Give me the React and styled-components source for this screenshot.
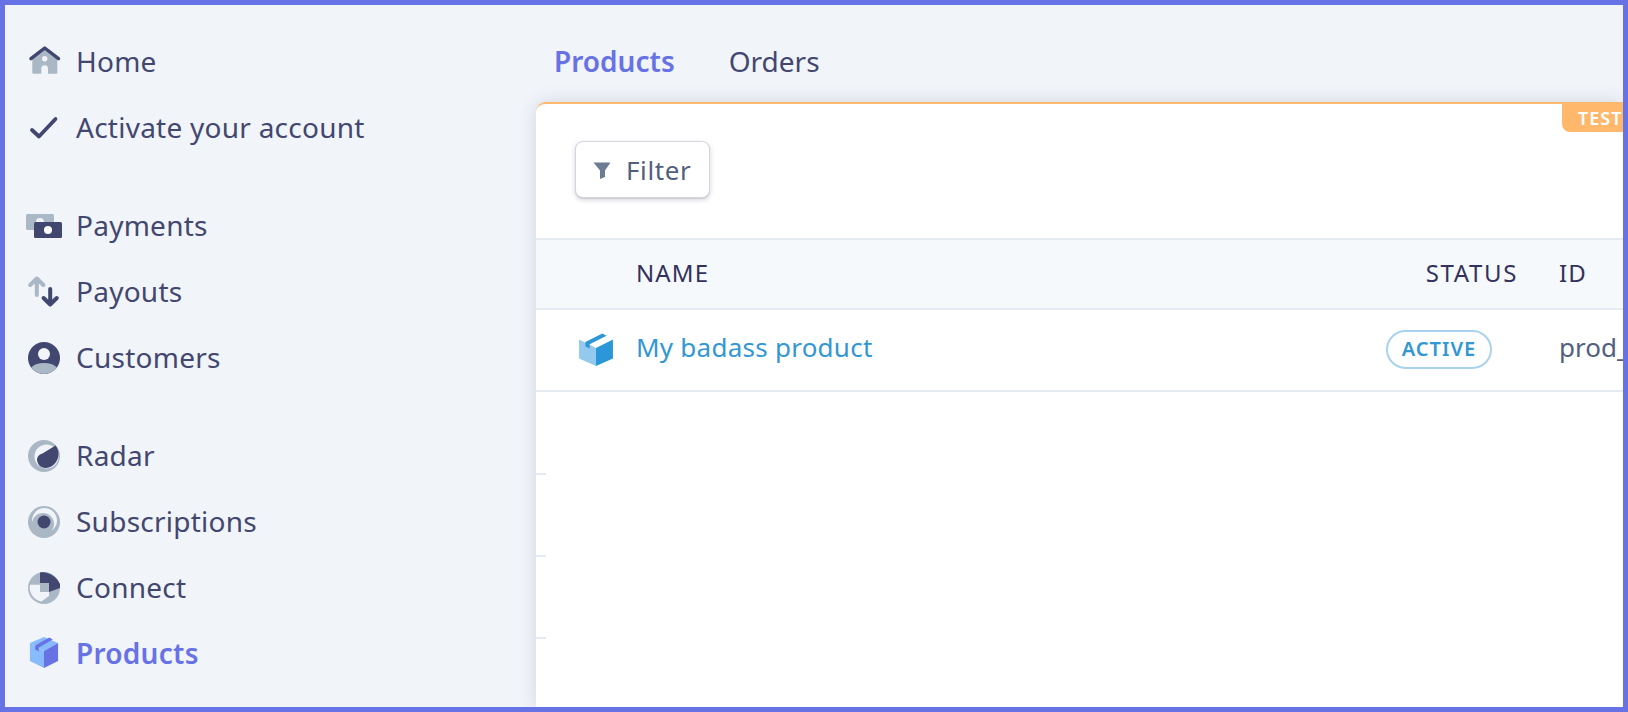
import React from 'react'
import styled, { createGlobalStyle } from 'styled-components'

const Global = createGlobalStyle`
  html, body { margin: 0; padding: 0; height: 100%; }
  body { font-family: "Noto Sans", Lato, sans-serif; background: #f1f4f9; }
  #root { height: 100%; }
`

const DARK = '#424770'
const GREY = '#aab7c4'
const BG = '#f1f4f9'

// Icons
const HomeIcon = () => (
  <svg width="36" height="36" viewBox="0 0 36 36">
    <path fill={GREY} fillRule="evenodd" d="M6.300 12 18.700 4l12.600 8v16.700a1 1 0 0 1-1 1H22V24.500a3.300 3.300 0 0 0-6.700 0v5.200H7.300a1 1 0 0 1-1-1zM18.700 12a2.700 2.700 0 1 0 0 5.400 2.700 2.700 0 0 0 0-5.400z" />
    <path fill="none" stroke={DARK} strokeWidth="3.4" strokeLinecap="round" strokeLinejoin="round" d="M5 14.700 18.700 4 32.500 14.700" />
  </svg>
)

const CheckIcon = () => (
  <svg width="36" height="36" viewBox="0 0 36 36">
    <path fill="none" stroke={DARK} strokeWidth="3.8" strokeLinecap="round" strokeLinejoin="round" d="M6 20 13 26.500 29.500 9" />
  </svg>
)

const PaymentsIcon = () => (
  <svg width="36" height="36" viewBox="0 0 36 36">
    <rect x="0" y="6" width="28" height="16" rx="1.5" fill={GREY} />
    <circle cx="14" cy="14" r="4" fill={BG} />
    <rect x="8" y="14" width="28" height="16" rx="1.5" fill={DARK} />
    <circle cx="22" cy="22" r="4" fill="#fff" />
  </svg>
)

const PayoutsIcon = () => (
  <svg width="36" height="36" viewBox="0 0 36 36" fill="none" strokeWidth="4" strokeLinecap="round" strokeLinejoin="round">
    <path stroke={GREY} d="M10.800 21V4.500M4.200 11l6.600-6.500 6.600 6.500" />
    <path stroke={DARK} d="M24.200 15v15.500M17.600 24l6.600 6.500 6.600-6.500" />
  </svg>
)

const CustomersIcon = () => (
  <svg width="36" height="36" viewBox="0 0 36 36">
    <circle cx="18" cy="18" r="16" fill={DARK} />
    <path fill={GREY} d="M5.200 27.500C8 24.400 12.600 23 18 23s10 1.400 12.800 4.500A16 16 0 0 1 5.200 27.500z" />
    <circle cx="18" cy="14" r="6" fill={BG} />
  </svg>
)

const RadarIcon = () => (
  <svg width="36" height="36" viewBox="0 0 36 36">
    <circle cx="18" cy="18" r="16" fill={GREY} />
    <circle cx="20.500" cy="18.500" r="12" fill={BG} />
    <path fill={DARK} d="M29.500 7.500C31.500 10 32.500 13 32.500 16 32.500 24 26 30 19.500 30 14.500 30 11 26 11 21 11.500 18 13.500 16.500 16.500 15.500z" />
  </svg>
)

const SubscriptionsIcon = () => (
  <svg width="36" height="36" viewBox="0 0 36 36">
    <circle cx="18" cy="18" r="16" fill={GREY} />
    <circle cx="18.500" cy="16.500" r="12.500" fill={BG} />
    <circle cx="17" cy="20" r="11" fill={GREY} />
    <circle cx="18" cy="18" r="6.500" fill={DARK} />
  </svg>
)

const ConnectIcon = () => (
  <svg width="36" height="36" viewBox="0 0 36 36">
    <circle cx="18" cy="18" r="16" fill={GREY} />
    <path fill={BG} d="M4 14.700H14V22H23V26L15.500 31.500A14 14 0 0 1 4 14.700z" />
    <path fill={DARK} d="M14 2.500C22 1 31 7 34 14V18L23 22V13H14z" />
  </svg>
)

const BoxIcon = ({ top, side, dark, small }) => (
  <svg width="36" height="36" viewBox={small ? '-2.5 0 41 36' : '1 0 34 34'} preserveAspectRatio="none">
    <path fill={top} d="M18 1 34 7 18 15 2 7z" />
    <path fill={side} d="M2 7 18 15V32L2 25z" />
    <path fill={dark} d="M18 15 34 7V25L18 32z" />
    <path fill={dark} d="M8 9.500 24 1.500 28 3.500 12 11.500V15.500L8 13.500z" />
  </svg>
)

const FilterIcon = () => (
  <svg width="18" height="18" viewBox="0 0 18 18">
    <path fill="#6b7c93" d="M.5 1.500H17.500L12 9.500V16L7 18V9.500z" />
  </svg>
)

// Layout
const Frame = styled.div`
  box-sizing: border-box;
  width: 100%;
  height: 712px;
  border: 5px solid #6772e5;
  background: ${BG};
  display: flex;
  overflow: hidden;
`

const Sidebar = styled.nav`
  width: 531px;
  flex: none;
  padding: 24px 0 0 21px;
  box-sizing: border-box;
  display: flex;
  flex-direction: column;
  gap: 32px;
`

const NavGroup = styled.div`
  display: flex;
  flex-direction: column;
`

const NavItem = styled.a`
  height: 66px;
  display: flex;
  align-items: center;
  gap: 14px;
  font-size: 28px;
  letter-spacing: 0.25px;
  color: ${p => (p.$active ? '#6772e5' : DARK)};
  font-weight: ${p => (p.$active ? 600 : 400)};
`

const Label = styled.span`
  padding-bottom: 3px;
`

const Main = styled.main`
  flex: 1;
  min-width: 0;
  display: flex;
  flex-direction: column;
`

const Tabs = styled.div`
  height: 97px;
  flex: none;
  display: flex;
  gap: 54px;
  padding: 24px 0 0 18px;
  box-sizing: border-box;
`

const Tab = styled.a`
  height: 66px;
  display: flex;
  align-items: center;
  padding-bottom: 3px;
  box-sizing: border-box;
  font-size: 28px;
  color: ${p => (p.$active ? '#6772e5' : DARK)};
  font-weight: ${p => (p.$active ? 600 : 400)};
`

const Card = styled.section`
  position: relative;
  flex: 1;
  background: #fff;
  border-top: 2px solid #ffb86c;
  border-top-left-radius: 10px;
  box-shadow: 0 0 18px rgba(50, 50, 93, 0.15);
`

const TestBadge = styled.div`
  position: absolute;
  top: 0;
  right: -6px;
  width: 67px;
  height: 28px;
  padding-left: 16px;
  box-sizing: border-box;
  background: #ffb86c;
  border-bottom-left-radius: 8px;
  color: #fff;
  font-size: 18px;
  font-weight: 600;
  line-height: 28px;
  letter-spacing: 1px;
  overflow: hidden;
`

const Toolbar = styled.div`
  height: 134px;
  padding: 37px 0 0 39px;
  box-sizing: border-box;
`

const FilterButton = styled.button`
  width: 135px;
  height: 57px;
  display: flex;
  align-items: center;
  gap: 15px;
  padding: 0 0 0 17px;
  background: #fff;
  border: 1px solid #d3d6de;
  border-radius: 8px;
  box-shadow: 0 2px 5px rgba(50, 50, 93, 0.2), 0 1px 1px rgba(0, 0, 0, 0.1);
  color: #525f7f;
  font: 400 26px "Noto Sans", sans-serif;
  letter-spacing: 0.6px;
`

const Row = styled.div`
  display: grid;
  grid-template-columns: 101px 1fr 126px 64px;
  align-items: center;
  box-sizing: border-box;
  height: ${p => p.$h}px;
  background: ${p => p.$bg || '#fff'};
  border-bottom: 2px solid #e6ebf1;
  border-top: ${p => (p.$top ? '2px solid #e6ebf1' : 'none')};
`

const HeadCell = styled.div`
  font-size: 24px;
  letter-spacing: ${p => (p.$right ? '1.6px' : '1.1px')};
  color: #32325d;
  padding-bottom: 4px;
  white-space: nowrap;
  justify-self: ${p => (p.$right ? 'end' : 'start')};
  margin-right: ${p => (p.$right ? '41px' : '0')};
  margin-left: ${p => (p.$last ? '0' : '-1px')};
`

const IconCell = styled.div`
  display: flex;
  justify-content: flex-end;
  padding-right: 23px;
`

const ProductLink = styled.a`
  font-size: 26px;
  letter-spacing: 0.25px;
  color: #3297d3;
  padding-bottom: 6px;
  margin-left: -1px;
`

const Pill = styled.span`
  justify-self: start;
  margin-left: -47px;
  margin-bottom: 2px;
  width: 106px;
  height: 39px;
  box-sizing: border-box;
  display: flex;
  align-items: center;
  justify-content: center;
  border: 2px solid #a7d3ef;
  border-radius: 20px;
  color: #3297d3;
  font-size: 20px;
  font-weight: 600;
  letter-spacing: 1px;
  padding-bottom: 1px;
`

const IdCell = styled.div`
  font-size: 26px;
  color: #525f7f;
  white-space: nowrap;
  padding-bottom: 6px;
`

const Tick = styled.div`
  position: absolute;
  left: 0;
  top: ${p => p.$y}px;
  width: 10px;
  height: 2px;
  background: #e6ebf1;
`

const groups = [
  [
    { label: 'Home', icon: <HomeIcon /> },
    { label: 'Activate your account', icon: <CheckIcon /> },
  ],
  [
    { label: 'Payments', icon: <PaymentsIcon /> },
    { label: 'Payouts', icon: <PayoutsIcon /> },
    { label: 'Customers', icon: <CustomersIcon /> },
  ],
  [
    { label: 'Radar', icon: <RadarIcon /> },
    { label: 'Subscriptions', icon: <SubscriptionsIcon /> },
    { label: 'Connect', icon: <ConnectIcon /> },
    { label: 'Products', icon: <BoxIcon small top="#87bbfd" side="#87bbfd" dark="#6772e5" />, active: true },
  ],
]

export default function App() {
  return (
    <Frame>
      <Global />
      <Sidebar>
        {groups.map((items, i) => (
          <NavGroup key={i}>
            {items.map(item => (
              <NavItem key={item.label} $active={item.active}>
                {item.icon}
                <Label>{item.label}</Label>
              </NavItem>
            ))}
          </NavGroup>
        ))}
      </Sidebar>
      <Main>
        <Tabs>
          <Tab $active>Products</Tab>
          <Tab>Orders</Tab>
        </Tabs>
        <Card>
          <TestBadge>TEST</TestBadge>
          <Toolbar>
            <FilterButton><FilterIcon />Filter</FilterButton>
          </Toolbar>
          <Row $h={72} $bg="#f6f9fc" $top>
            <span />
            <HeadCell>NAME</HeadCell>
            <HeadCell $right>STATUS</HeadCell>
            <HeadCell $last>ID</HeadCell>
          </Row>
          <Row $h={82}>
            <IconCell><BoxIcon top="#fff" side="#93c9ee" dark="#2b96d8" /></IconCell>
            <ProductLink>My badass product</ProductLink>
            <Pill>ACTIVE</Pill>
            <IdCell>prod_</IdCell>
          </Row>
          <Tick $y={369} />
          <Tick $y={451} />
          <Tick $y={533} />
        </Card>
      </Main>
    </Frame>
  )
}
